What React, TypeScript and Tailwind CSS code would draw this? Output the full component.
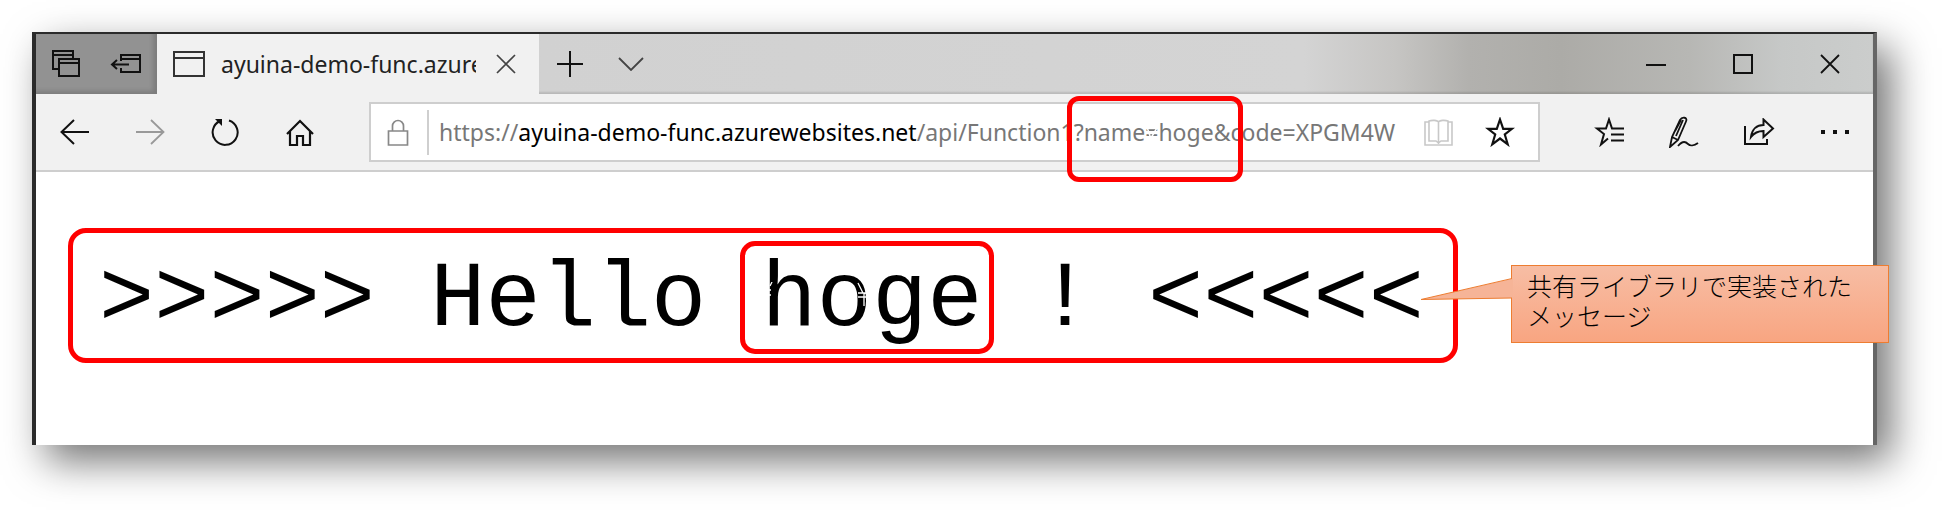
import React from "react";

const ink = "fill-none stroke-[#111]";

function IconButton({ label, className, children }: { label: string; className: string; children: React.ReactNode }) {
  return (
    <button type="button" aria-label={label} className={`flex shrink-0 items-center justify-center ${className}`}>
      {children}
    </button>
  );
}

function TitleBar() {
  return (
    <header className="flex h-15 bg-[linear-gradient(90deg,#cfcfcf_0%,#d4d4d4_69%,#c6c5c3_74%,#b2b1ae_78%,#acaba7_83%,#b7b7b4_90%,#c6c8c7_95%,#cbcdcc_100%)] shadow-[inset_0_-2px_2px_rgba(0,0,0,0.12)]">
      <div className="flex w-[121px] shrink-0 items-center bg-[#929292] pl-3 shadow-[inset_-4px_-3px_4px_rgba(0,0,0,0.15)]">
        <IconButton label="Tabs you've set aside" className="w-9">
          <svg width="28" height="28" viewBox="0 0 28 28" className={ink} strokeWidth="2">
            <path d="M7 19H1V1h20v7M1 5h20M7 9h20v17H7zM7 13h20" />
          </svg>
        </IconButton>
        <IconButton label="Set these tabs aside" className="ml-6 w-9">
          <svg width="32" height="24" viewBox="0 0 32 24" className={ink} strokeWidth="2">
            <path d="M11 9V3h19v17H11v-4M11 7h19M19 12.500H2M7 8l-5 4.500 5 4.500" />
          </svg>
        </IconButton>
      </div>
      <div className="flex w-[382px] shrink-0 items-center bg-[#f1f1f1] pl-4">
        <svg width="32" height="26" viewBox="0 0 32 26" className="shrink-0 fill-none stroke-[#333]" strokeWidth="2">
          <path d="M1 1h30v24H1zM1 7h30" />
        </svg>
        <span className="ml-4 w-[255px] overflow-hidden text-[23px] leading-8 whitespace-nowrap text-[#222]">ayuina-demo-func.azurewebsites.net</span>
        <IconButton label="Close tab" className="ml-[14px] w-8">
          <svg width="20" height="20" viewBox="0 0 20 20" className="fill-none stroke-[#444]" strokeWidth="1.700">
            <path d="M1 1l18 18M19 1L1 19" />
          </svg>
        </IconButton>
      </div>
      <IconButton label="New tab" className="w-[62px]">
        <svg width="26" height="26" viewBox="0 0 26 26" className={ink} strokeWidth="2">
          <path d="M13 0v26M0 13h26" />
        </svg>
      </IconButton>
      <IconButton label="Show tab previews" className="w-[60px]">
        <svg width="26" height="14" viewBox="0 0 26 14" className="fill-none stroke-[#444]" strokeWidth="1.800">
          <path d="M1 1l12 12L25 1" />
        </svg>
      </IconButton>
      <div className="ml-auto flex">
        <IconButton label="Minimize" className="w-[87px]">
          <svg width="20" height="20" viewBox="0 0 20 20" className={ink} strokeWidth="2">
            <path d="M0 11h20" />
          </svg>
        </IconButton>
        <IconButton label="Maximize" className="w-[87px]">
          <svg width="20" height="20" viewBox="0 0 20 20" className={ink} strokeWidth="2">
            <path d="M1 1h18v18H1z" />
          </svg>
        </IconButton>
        <IconButton label="Close" className="w-[87px]">
          <svg width="20" height="20" viewBox="0 0 20 20" className={ink} strokeWidth="1.800">
            <path d="M1 1l18 18M19 1L1 19" />
          </svg>
        </IconButton>
      </div>
    </header>
  );
}

function AddressBar() {
  return (
    <div className="flex h-[60px] min-w-0 flex-1 items-center border-2 border-[#cecece] bg-white">
      <svg width="22" height="27" viewBox="0 0 22 27" className="ml-4 shrink-0 fill-none stroke-[#888]" strokeWidth="1.700">
        <path d="M1.500 12h19v14h-19zM5.500 12V7a5.500 5.500 0 0 1 11 0v5" />
      </svg>
      <span className="ml-[18px] h-[45px] w-[2px] shrink-0 bg-[#cfcfcf]" />
      <a href="#" className="ml-[10px] min-w-0 flex-1 overflow-hidden text-[23px] leading-9 whitespace-nowrap text-[#777]">
        https://<span className="text-black">ayuina-demo-func.azurewebsites.net</span>/api/Function1?name
        <span className="relative">
          =
          <svg width="12" height="14" viewBox="0 0 12 14" className="absolute top-[10px] left-[1px] fill-none stroke-white" strokeWidth="1.500">
            <path d="M1 1l4 12M12 0L5 12" />
          </svg>
        </span>
        hoge&amp;code=XPGM4W
      </a>
      <IconButton label="Reading view" className="ml-4 w-9">
        <svg width="29" height="27" viewBox="0 0 29 27" className="fill-none stroke-[#c8c8c8]" strokeWidth="1.600">
          <path d="M5 3H1v23h27V3h-4M14.500 3v22M14.500 3c-1-2-7-2-9.500-1v20h7l2.500 2M14.500 3c1-2 7-2 9.500-1v20h-7l-2.500 2" />
        </svg>
      </IconButton>
      <IconButton label="Add to favorites" className="mr-5 ml-[26px] w-9">
        <svg width="30" height="30" viewBox="0 0 30 30" className={ink} strokeWidth="2.200">
          <path d="M15 2.500l3.200 9.300H27l-7.200 5.700 2.900 9.800L15 21.500l-7.700 5.800 2.900-9.800L3 11.800h8.800z" />
        </svg>
      </IconButton>
    </div>
  );
}

function Toolbar() {
  return (
    <nav className="flex h-[78px] items-center border-b-2 border-[#cecece] bg-[#f1f1f1]">
      <IconButton label="Back" className="w-[76px]">
        <svg width="29" height="26" viewBox="0 0 29 26" className={ink} strokeWidth="2">
          <path d="M29 13H1.500M14 1L1.500 13 14 25" />
        </svg>
      </IconButton>
      <IconButton label="Forward" className="w-[76px]">
        <svg width="29" height="26" viewBox="0 0 29 26" className="fill-none stroke-[#999]" strokeWidth="1.800">
          <path d="M0 13h27.500M15 1l12.500 12L15 25" />
        </svg>
      </IconButton>
      <IconButton label="Refresh" className="w-[74px]">
        <svg width="28" height="28" viewBox="0 0 28 28" className={ink} strokeWidth="2">
          <path d="M18 2.500A12.500 12.500 0 1 1 9 3" />
          <path d="M4 1h7v7z" className="fill-[#111] stroke-none" />
        </svg>
      </IconButton>
      <IconButton label="Home" className="w-[76px]">
        <svg width="28" height="27" viewBox="0 0 28 27" className={ink} strokeWidth="2.200">
          <path d="M1 15L14 2l13 13M4 12v14h7v-9h6v9h7V12" />
        </svg>
      </IconButton>
      <div className="ml-[31px] flex min-w-0 flex-1">
        <AddressBar />
      </div>
      <IconButton label="Favorites" className="ml-[31px] w-[75px]">
        <svg width="30" height="30" viewBox="0 0 30 30" className={ink} strokeWidth="2">
          <path d="M30 11.500H18L15 2.500l-3 9H3l7 5.500-3 10.500 7-6M17 17.500h13M17 23.500h13" />
        </svg>
      </IconButton>
      <IconButton label="Add notes" className="w-[75px]">
        <svg width="30" height="32" viewBox="0 0 30 32" className={ink} strokeWidth="1.800">
          <path d="M1 31l2-10L11 4c2-3.500 8-3 6 1.500L9 24zM3 21l6 3M12 4l-6 11M14 4L7 20M9 30c5-6 8-4 10-2s6 2 10-1" />
        </svg>
      </IconButton>
      <IconButton label="Share" className="w-[75px]">
        <svg width="32" height="28" viewBox="0 0 32 28" className={ink} strokeWidth="2">
          <path d="M2 8v18h22v-5M8 19C9 11 14 7 20.500 7V1.500L30 10.500 20.500 19v-6C15 13 11 15 8 19z" />
        </svg>
      </IconButton>
      <IconButton label="Settings and more" className="w-[77px]">
        <svg width="28" height="4" viewBox="0 0 28 4" className="fill-[#111]">
          <path d="M0 0h4v4H0zM12 0h4v4h-4zM24 0h4v4h-4z" />
        </svg>
      </IconButton>
    </nav>
  );
}

export default function App() {
  return (
    <div className="relative bg-white px-8 pt-8 pb-[65px] font-['Noto_Sans',sans-serif]">
      <main className="mr-[33px] border-x-4 border-t-2 border-[#2b2b2b] border-r-[#666] bg-white shadow-[14px_16px_38px_0px_rgba(0,0,0,0.55)]">
        <TitleBar />
        <Toolbar />
        <div className="flex h-[273px] items-start pt-[77px] pl-[63px]">
          <pre className="font-['Liberation_Mono',monospace] text-[92px] leading-[104px] text-black">{">>>>> Hello hoge ! <<<<<"}</pre>
        </div>
      </main>
      <div className="absolute top-24 left-[1067px] h-[86px] w-[176px] rounded-xl border-[5px] border-[#f00]" />
      <div className="absolute top-[228px] left-[68px] h-[135px] w-[1390px] rounded-[18px] border-[5px] border-[#f00]" />
      <div className="absolute top-[241px] left-[740px] h-[113px] w-[254px] rounded-[15px] border-[5px] border-[#f00]" />
      <svg width="102" height="26" viewBox="0 0 102 26" className="absolute top-[282px] left-[767px] fill-none stroke-white" strokeWidth="1.300">
        <path d="M5 0L3 4M0 8h4M0 13h4M91 1l5 10M101 10l-4 2v12M91 11h10M91 15h10" />
      </svg>
      <aside className="absolute top-[265px] left-[1511px] h-[78px] w-[378px] border border-[#ed7d31] bg-linear-to-b from-[#f7bda4] to-[#f8a581] pt-1 pl-[15px] font-['Noto_Sans_CJK_JP',sans-serif] text-[25px] leading-[30px] font-light text-black">
        <svg width="93" height="24" viewBox="0 0 93 24" className="absolute top-[11px] -left-[92px]">
          <path d="M93 1.500L1 22.500 93 21z" className="fill-[#f6b497]" />
          <path d="M92 1.500L1 22.500 92 21" className="fill-none stroke-[#ed7d31]" />
        </svg>
        共有ライブラリで実装された
        <br />
        メッセージ
      </aside>
    </div>
  );
}
